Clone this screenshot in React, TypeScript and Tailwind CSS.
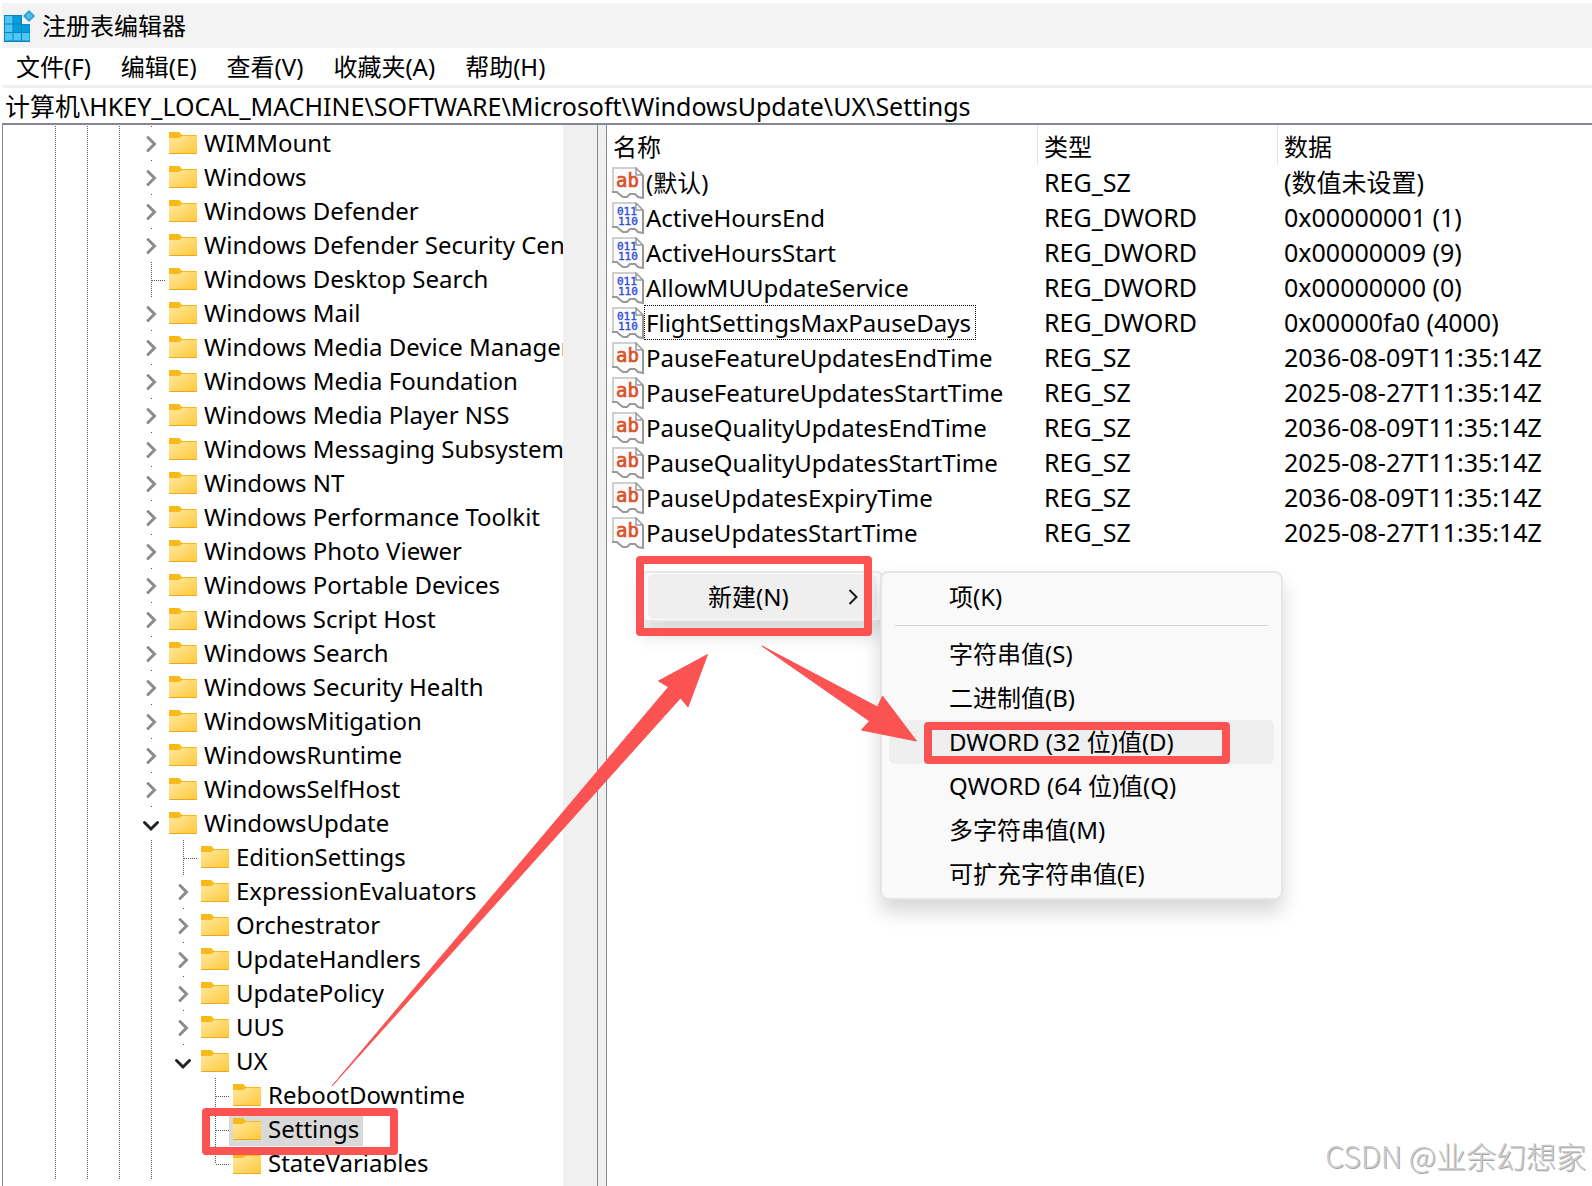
import { useState } from "react";

type TreeNode = {
  name: string;
  level: number;
  state: "leaf" | "closed" | "open";
  last?: boolean;
};

type RegValue = {
  name: string;
  type: "REG_SZ" | "REG_DWORD";
  data: string;
};

const MENUS = ["文件(F)", "编辑(E)", "查看(V)", "收藏夹(A)", "帮助(H)"];

const NODES: TreeNode[] = [
  { name: "WIMMount", level: 0, state: "closed" },
  { name: "Windows", level: 0, state: "closed" },
  { name: "Windows Defender", level: 0, state: "closed" },
  { name: "Windows Defender Security Center", level: 0, state: "closed" },
  { name: "Windows Desktop Search", level: 0, state: "leaf" },
  { name: "Windows Mail", level: 0, state: "closed" },
  { name: "Windows Media Device Manager", level: 0, state: "closed" },
  { name: "Windows Media Foundation", level: 0, state: "closed" },
  { name: "Windows Media Player NSS", level: 0, state: "closed" },
  { name: "Windows Messaging Subsystem", level: 0, state: "closed" },
  { name: "Windows NT", level: 0, state: "closed" },
  { name: "Windows Performance Toolkit", level: 0, state: "closed" },
  { name: "Windows Photo Viewer", level: 0, state: "closed" },
  { name: "Windows Portable Devices", level: 0, state: "closed" },
  { name: "Windows Script Host", level: 0, state: "closed" },
  { name: "Windows Search", level: 0, state: "closed" },
  { name: "Windows Security Health", level: 0, state: "closed" },
  { name: "WindowsMitigation", level: 0, state: "closed" },
  { name: "WindowsRuntime", level: 0, state: "closed" },
  { name: "WindowsSelfHost", level: 0, state: "closed" },
  { name: "WindowsUpdate", level: 0, state: "open" },
  { name: "EditionSettings", level: 1, state: "leaf" },
  { name: "ExpressionEvaluators", level: 1, state: "closed" },
  { name: "Orchestrator", level: 1, state: "closed" },
  { name: "UpdateHandlers", level: 1, state: "closed" },
  { name: "UpdatePolicy", level: 1, state: "closed" },
  { name: "UUS", level: 1, state: "closed" },
  { name: "UX", level: 1, state: "open", last: true },
  { name: "RebootDowntime", level: 2, state: "leaf" },
  { name: "Settings", level: 2, state: "leaf" },
  { name: "StateVariables", level: 2, state: "leaf", last: true },
];

const VALUES: RegValue[] = [
  { name: "(默认)", type: "REG_SZ", data: "(数值未设置)" },
  { name: "ActiveHoursEnd", type: "REG_DWORD", data: "0x00000001 (1)" },
  { name: "ActiveHoursStart", type: "REG_DWORD", data: "0x00000009 (9)" },
  { name: "AllowMUUpdateService", type: "REG_DWORD", data: "0x00000000 (0)" },
  { name: "FlightSettingsMaxPauseDays", type: "REG_DWORD", data: "0x00000fa0 (4000)" },
  { name: "PauseFeatureUpdatesEndTime", type: "REG_SZ", data: "2036-08-09T11:35:14Z" },
  { name: "PauseFeatureUpdatesStartTime", type: "REG_SZ", data: "2025-08-27T11:35:14Z" },
  { name: "PauseQualityUpdatesEndTime", type: "REG_SZ", data: "2036-08-09T11:35:14Z" },
  { name: "PauseQualityUpdatesStartTime", type: "REG_SZ", data: "2025-08-27T11:35:14Z" },
  { name: "PauseUpdatesExpiryTime", type: "REG_SZ", data: "2036-08-09T11:35:14Z" },
  { name: "PauseUpdatesStartTime", type: "REG_SZ", data: "2025-08-27T11:35:14Z" },
];

const NEW_ITEMS = ["字符串值(S)", "二进制值(B)", "DWORD (32 位)值(D)", "QWORD (64 位)值(Q)", "多字符串值(M)", "可扩充字符串值(E)"];

function RegeditIcon() {
  return (
    <svg width="32" height="32" viewBox="0 0 32 32" className="shrink-0" aria-hidden="true">
      <path d="M0 5h18v9h8v18H0z" fill="#0b83c0" />
      <path d="M1 6h7.500v7.500H1z M1 14.500h7.500v7.500H1z" fill="#4cc6f4" />
      <path d="M9.500 6H17v7.500H9.500z M9.500 14.500H17V22H9.500z M18 14.500h7.500V22H18z" fill="#069ddb" />
      <path d="M1 23h7.500v7.500H1z M9.500 23H17v7.500H9.500z M18 23h7.500v7.500H18z" fill="#4cc6f4" />
      <path d="M25 0l6 6-6 6-6-6z" fill="#2d9fd0" />
      <path d="M25 2.600l3.400 3.400-3.400 3.400L21.600 6z" fill="#4fc3ee" />
    </svg>
  );
}

function FolderIcon() {
  return (
    <svg width="28" height="22" viewBox="0 0 28 22" className="shrink-0" aria-hidden="true">
      <defs>
        <linearGradient id="folder" x1="0" y1="0" x2="1" y2="1">
          <stop offset="0" stopColor="#ffe8a0" />
          <stop offset="1" stopColor="#ffc938" />
        </linearGradient>
      </defs>
      <path d="M0 1q0-1 1-1h8.500q.8 0 1.400.6L13 3h14q1 0 1 1v4H0z" fill="#fbb917" />
      <path d="M0 6h10l3-2h14q1 0 1 1v16q0 1-1 1H1q-1 0-1-1z" fill="url(#folder)" />
      <path d="M0 21q0 1 1 1h26q1 0 1-1z" fill="#e9a820" />
    </svg>
  );
}

function ValueIcon({ type }: { type: RegValue["type"] }) {
  return (
    <svg width="32" height="32" viewBox="0 0 32 32" className="shrink-0" aria-hidden="true">
      <path d="M1 1h23l7 7v23l-5-1-3-3h-5l-3 3h-5l-4-4-5-1z" fill="#fbfbfb" />
      <path d="M1 25V1h23" fill="none" stroke="#cfcfcf" strokeWidth="2" />
      <path d="M24 1v7h7z" fill="#fff" stroke="#9a9a9a" strokeWidth="1.500" />
      <path d="M31 8v23l-5-1-3-3h-5l-3 3h-4l-4-3-2-2H0" fill="none" stroke="#999" strokeWidth="2" />
      {type === "REG_SZ" ? (
        <text x="4" y="20" strokeWidth="0.700" className="fill-[#d9532c] stroke-[#d9532c] font-['DejaVu_Sans_Mono'] text-[19px]">ab</text>
      ) : (
        <g strokeWidth="0.400" className="fill-[#2f4fd8] stroke-[#2f4fd8] font-['DejaVu_Sans_Mono'] text-[11px]">
          <text x="5" y="13">011</text>
          <text x="6" y="23">110</text>
        </g>
      )}
    </svg>
  );
}

const dotsY = "bg-[repeating-linear-gradient(to_bottom,#555_0,#555_1px,transparent_1px,transparent_2px)]";
const dotsX = "bg-[repeating-linear-gradient(to_right,#555_0,#555_1px,transparent_1px,transparent_2px)]";

function Guide() {
  return (
    <span className="flex w-8 shrink-0 justify-center self-stretch pl-px">
      <span className={`w-px ${dotsY}`} />
    </span>
  );
}

function Expander({ node, onToggle }: { node: TreeNode; onToggle: () => void }) {
  if (node.state === "leaf") {
    return (
      <span className="flex w-[30px] shrink-0 self-stretch pl-4">
        <span className={`w-px ${dotsY} ${node.last ? "h-[18px]" : "h-full"}`} />
        <span className={`mt-[18px] h-px flex-1 ${dotsX}`} />
      </span>
    );
  }
  return (
    <button type="button" onClick={onToggle} aria-label={node.name} className="w-[30px] shrink-0 self-stretch">
      <svg width="30" height="34" viewBox="0 0 30 34" fill="none" aria-hidden="true">
        <path d="M16 0h1v1h-1z" fill="#555" />
        {node.state === "open" ? (
          <path d="M9.500 16.500l6.500 6.500 6.500-6.500" stroke="#222" strokeWidth="3" strokeLinecap="round" />
        ) : (
          <path d="M13 11.500l6.500 6.500-6.500 6.500" stroke="#8c8c8c" strokeWidth="3" strokeLinecap="round" />
        )}
      </svg>
    </button>
  );
}

function Annotations() {
  return (
    <svg width="1592" height="1186" viewBox="0 0 1592 1186" className="pointer-events-none absolute top-0 left-0" aria-hidden="true">
      <g fill="none" stroke="#fb5352" strokeWidth="8" strokeLinejoin="round">
        <rect x="640" y="560" width="228" height="72" />
        <rect x="928" y="726" width="298" height="34" />
        <rect x="206" y="1112" width="188" height="39" />
      </g>
      <g fill="#fb5352" stroke="#fb5352" strokeLinejoin="round">
        <path d="M332 1086L668.500 687 658.500 681 707.500 654.500 688 707 680.500 698z" />
        <path d="M762 646l115.500 61 5-11 34 45-55-11 8-9z" />
      </g>
    </svg>
  );
}

export default function App() {
  const [selected, setSelected] = useState("Settings");
  const [focused, setFocused] = useState("FlightSettingsMaxPauseDays");
  const [path, setPath] = useState("计算机\\HKEY_LOCAL_MACHINE\\SOFTWARE\\Microsoft\\WindowsUpdate\\UX\\Settings");

  return (
    <div className="relative flex min-h-screen flex-col overflow-hidden bg-white pt-[3px] pl-0.5 font-['Noto_Sans','Noto_Sans_CJK_SC',sans-serif] text-2xl text-black">
      <header className="flex h-[45px] items-center gap-1.5 bg-[#f3f3f3] pl-0.5">
        <RegeditIcon />
        <h1 className="leading-8">注册表编辑器</h1>
      </header>

      <nav className="flex h-[37px] items-center gap-0.5">
        {MENUS.map((m) => (
          <button key={m} type="button" className="px-[14px] leading-8">
            {m}
          </button>
        ))}
      </nav>

      <div className="border-t-[3px] border-b-2 border-t-[#f0f0f0] border-b-[#828790]">
        <input
          aria-label="地址"
          value={path}
          onChange={(e) => setPath(e.target.value)}
          className="block h-[35px] w-full pb-0.5 pl-[3px] text-[25px] leading-8 outline-none"
        />
      </div>

      <main className="flex flex-1">
        {/* Árbol de claves */}
        <section className="flex w-[596px] shrink-0 border-x border-[#828790]">
          <ul className="min-w-0 flex-1 overflow-hidden pt-px pb-[5px] pl-9">
            {NODES.map((node) => (
              <li key={node.name} className="flex h-[34px] items-center whitespace-nowrap">
                <Guide />
                <Guide />
                <Guide />
                {node.level > 0 && <Guide />}
                {node.level > 1 && <span className="w-8 shrink-0" />}
                <Expander node={node} onToggle={() => setSelected(node.name)} />
                <button
                  type="button"
                  onClick={() => setSelected(node.name)}
                  className={`flex h-full items-center gap-[7px] px-1 leading-8 ${selected === node.name ? "bg-[#d9d9d9]" : ""}`}
                >
                  <FolderIcon />
                  {node.name}
                </button>
              </li>
            ))}
          </ul>
          <div className="w-[34px] shrink-0 bg-[#f0f0f0]" />
        </section>

        <div className="w-2 shrink-0 bg-[#f0f0f0]" />

        {/* Valores */}
        <section className="min-w-0 flex-1 border-l border-[#828790]">
          <table className="w-full table-fixed border-separate border-spacing-0 text-left">
            <colgroup>
              <col className="w-[431px]" />
              <col className="w-[240px]" />
              <col />
            </colgroup>
            <thead>
              <tr className="h-10">
                <th className="border-r border-[#e5e5e5] p-0 pt-[3px] pl-[6px] leading-8 font-normal">名称</th>
                <th className="border-r border-[#e5e5e5] p-0 pt-[3px] pl-[6px] leading-8 font-normal">类型</th>
                <th className="p-0 pt-[3px] pl-[6px] leading-8 font-normal">数据</th>
              </tr>
            </thead>
            <tbody>
              {VALUES.map((v) => (
                <tr key={v.name} className="h-[35px]" onClick={() => setFocused(v.name)}>
                  <td className="p-0 pl-[5px]">
                    <div className="flex items-center">
                      <ValueIcon type={v.type} />
                      <span className={`border border-dotted pr-1 pl-px leading-[33px] ${focused === v.name ? "border-black" : "border-transparent"}`}>
                        {v.name}
                      </span>
                    </div>
                  </td>
                  <td className="p-0 pl-[6px] text-[25px] leading-[35px]">{v.type}</td>
                  <td className="p-0 pl-[6px] text-[25px] leading-[35px]">{v.data}</td>
                </tr>
              ))}
            </tbody>
          </table>
        </section>
      </main>

      {/* Menú contextual */}
      <div role="menu" className="absolute top-[571px] left-[642px] w-[241px] rounded-md border-2 border-[#e8e8e8] bg-[#f9f9f9] px-1 py-px shadow-[0_12px_20px_rgba(0,0,0,0.16)]">
        <button type="button" role="menuitem" className="flex h-[45px] w-full items-center justify-between rounded-md bg-[#efefef] pr-[19px] pl-[60px] leading-8">
          新建(N)
          <svg width="10" height="16" viewBox="0 0 10 16" fill="none" aria-hidden="true">
            <path d="M1.500 1l7 7-7 7" stroke="#1a1a1a" strokeWidth="2" />
          </svg>
        </button>
      </div>
      <div role="menu" className="absolute top-[571px] left-[880px] w-[403px] rounded-lg border-2 border-[#e5e5e5] bg-[#f9f9f9] px-[7px] py-0.5 shadow-[0_12px_20px_rgba(0,0,0,0.16)]">
        <button type="button" role="menuitem" className="block h-11 w-full pl-[60px] text-left leading-8">
          项(K)
        </button>
        <div className="mx-[6px] my-[6px] h-px bg-[#d5d5d5]" />
        {NEW_ITEMS.map((item) => (
          <button
            key={item}
            type="button"
            role="menuitem"
            className={`block h-11 w-full rounded-md pl-[60px] text-left leading-8 ${item.startsWith("DWORD") ? "bg-[#efefef]" : ""}`}
          >
            {item}
          </button>
        ))}
      </div>

      <Annotations />

      <p className="absolute right-[6px] bottom-[13px] font-['Noto_Sans_CJK_SC',sans-serif] text-3xl leading-9 font-light text-[#cccccc] [text-shadow:1px_1px_0_#a8a8a8,-1px_-1px_0_#fff]">
        CSDN @业余幻想家
      </p>
    </div>
  );
}
